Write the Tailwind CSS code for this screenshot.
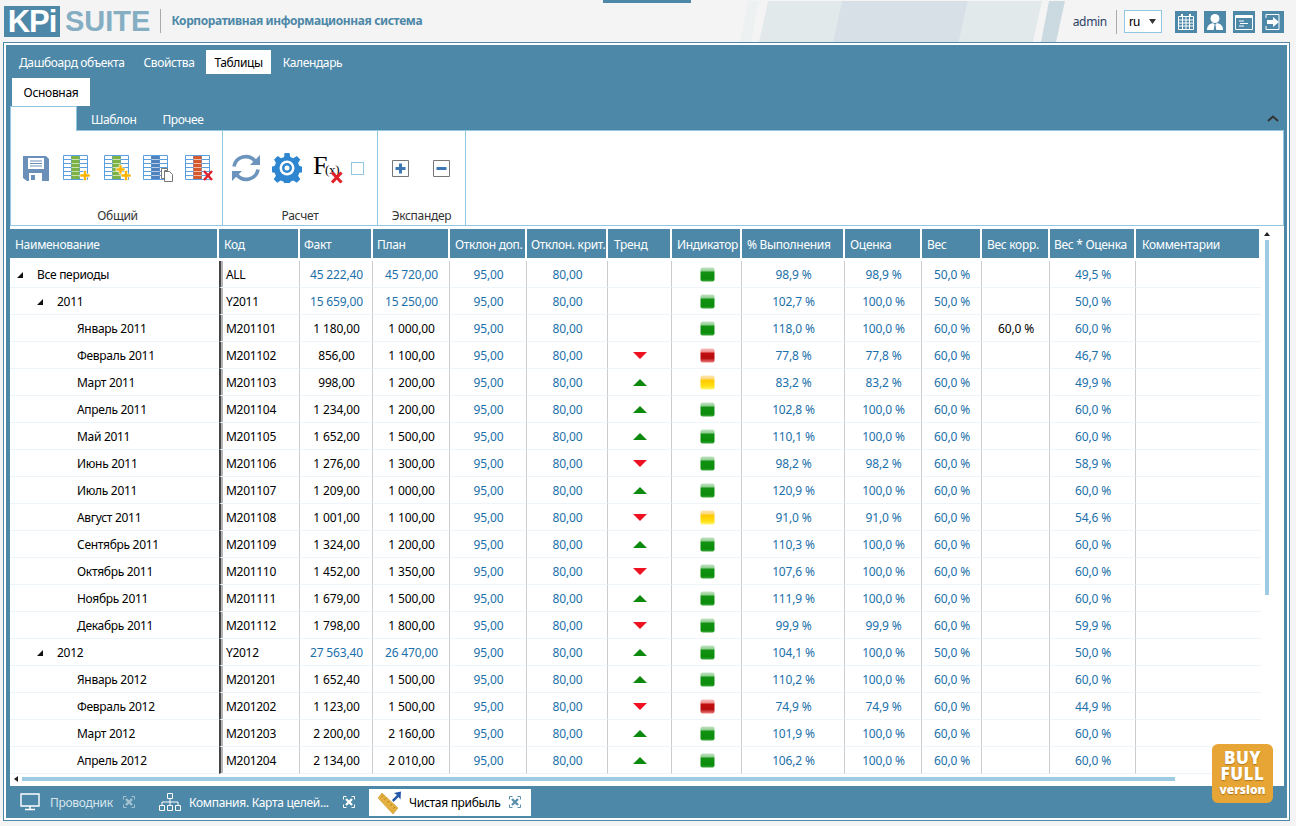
<!DOCTYPE html>
<html lang="ru">
<head>
<meta charset="utf-8">
<script src="https://cdn.jsdelivr.net/npm/@tailwindcss/browser@4"></script>
<title>KPI Suite</title>
</head>
<body class="w-[1296px] h-[826px] overflow-hidden bg-[#f4f4f4] font-['Noto_Sans','Open_Sans',sans-serif] text-[12px] tracking-[-0.3px] text-black">
<svg width="0" height="0" class="absolute">
<defs>
<linearGradient id="gg" x1="0" y1="0" x2="0" y2="1"><stop offset="0" stop-color="#c4e4c4"/><stop offset=".25" stop-color="#8fcd8f"/><stop offset=".32" stop-color="#129212"/><stop offset=".82" stop-color="#0b8c0b"/><stop offset="1" stop-color="#3aa83a"/></linearGradient>
<linearGradient id="gr" x1="0" y1="0" x2="0" y2="1"><stop offset="0" stop-color="#f7c0c0"/><stop offset=".25" stop-color="#f08c8c"/><stop offset=".32" stop-color="#c30d0d"/><stop offset=".7" stop-color="#b50c0c"/><stop offset="1" stop-color="#f08080"/></linearGradient>
<linearGradient id="gy" x1="0" y1="0" x2="0" y2="1"><stop offset="0" stop-color="#fbe6b0"/><stop offset=".25" stop-color="#fdd878"/><stop offset=".32" stop-color="#ffc800"/><stop offset=".75" stop-color="#ffdf10"/><stop offset="1" stop-color="#fff670"/></linearGradient>
<symbol id="ig" viewBox="0 0 15 15"><rect x=".5" y=".5" width="14" height="14" rx="2" fill="url(#gg)"/></symbol>
<symbol id="ir" viewBox="0 0 15 15"><rect x=".5" y=".5" width="14" height="14" rx="2" fill="url(#gr)"/></symbol>
<symbol id="iy" viewBox="0 0 15 15"><rect x=".5" y=".5" width="14" height="14" rx="2" fill="url(#gy)"/></symbol>
<symbol id="up" viewBox="0 0 14 7"><path d="M7 0 14 7H0z" fill="#0d8a0d"/></symbol>
<symbol id="dn" viewBox="0 0 14 7"><path d="M0 0H14L7 7z" fill="#ee1122"/></symbol>
<symbol id="ar" viewBox="0 0 6 6"><path d="M6 0V6H0z" fill="#111"/></symbol>
<symbol id="grid" viewBox="0 0 25 25">
<path d="M.5.5h24v24H.5zM.5 4.500h24M.5 8.500h24M.5 12.500h24M.5 16.500h24M.5 20.500h24M8.500 .5v24M16.500 .5v24" fill="none" stroke="#5a9fe0"/>
<path d="M8.500 1h8v23h-8z" fill="currentColor"/>
<path d="M8.500 4.500h8M8.500 8.500h8M8.500 12.500h8M8.500 16.500h8M8.500 20.500h8" stroke="#fff" stroke-width=".6"/>
</symbol>
<symbol id="exp" viewBox="0 0 12 12"><path d="M.5 3.500v-3h3M8.500.5h3v3M11.500 8.500v3h-3M3.500 11.500h-3v-3" fill="none" stroke="currentColor"/><path d="M3 3l6 6M9 3l-6 6" stroke="currentColor" stroke-width="2.400"/></symbol>
</defs>
</svg>

<header class="relative h-[42px] flex items-start">
  <svg class="absolute left-0 top-0" width="1296" height="42">
    <path d="M603 0h88v3h-88z" fill="#4d88a8"/>
    <path d="M748 1h11l-8 41h-11z" fill="#eef1f2"/>
    <path d="M768 1h74l-9 41h-74z" fill="#e2e9ea"/>
    <path d="M842 1h126l-9 41h-126z" fill="#d6e0e6"/>
    <path d="M968 1h74l-9 41h-74z" fill="#e2e9ea"/>
    <path d="M1049 1h16l-9 41h-15z" fill="#cbd9e1"/>
  </svg>
  <div class="relative ml-[4px] mt-[6px] w-[56px] h-[31px] bg-[#4d88a8] text-white font-['Liberation_Sans',sans-serif] font-bold text-[31px] leading-[31px] text-center tracking-[-1px]">KPi</div>
  <div class="relative ml-[5px] mt-[6px] h-[31px] text-[#86aec3] font-['Liberation_Sans',sans-serif] font-bold text-[29px] leading-[31px] tracking-normal">SUITE</div>
  <div class="relative ml-[10px] mt-[9px] w-px h-[24px] bg-[#aaa]"></div>
  <div class="relative ml-[10px] mt-[12px] text-[#4d88a8] font-bold text-[12px] leading-[18px] tracking-[-0.4px]">Корпоративная информационная система</div>
  <div class="relative ml-auto flex items-center mt-[10px] mr-[12px] h-[23px]">
    <span class="text-[#2c4264] mr-[9px]">admin</span>
    <span class="w-px h-[24px] bg-[#aaa] mr-[7px]"></span>
    <div class="w-[38px] h-[23px] bg-white border border-[#93c6e0] flex items-center justify-between pl-[4px] pr-[5px] mr-[13px] font-['Liberation_Sans',sans-serif] text-[13px] leading-none">ru<svg width="7" height="5"><path d="M0 0h7L3.500 5z" fill="#333"/></svg></div>
    <div class="flex gap-[7px]">
      <div class="w-[22px] h-[22px] bg-[#4d88a8] flex items-center justify-center"><svg width="18" height="18" viewBox="0 0 18 18" fill="none" stroke="#fff"><path d="M1.500 3.500h15v13h-15zM1.500 7h15M1.500 10h15M1.500 13h15M5.500 3.500v13M9 3.500v13M12.500 3.500v13" /><path d="M5 1v3M13 1v3" stroke-width="2"/></svg></div>
      <div class="w-[22px] h-[22px] bg-[#4d88a8] flex items-center justify-center"><svg width="18" height="18" viewBox="0 0 18 18" fill="#fff"><circle cx="9" cy="5.500" r="4.500"/><path d="M1 17c0-4 2-6 6-7l2 2 2-2c4 1 6 3 6 7z"/><path d="M8.500 12h1l.8 5H7.700z" fill="#4d88a8"/></svg></div>
      <div class="w-[22px] h-[22px] bg-[#4d88a8] flex items-center justify-center"><svg width="18" height="16" viewBox="0 0 18 16" fill="none" stroke="#fff"><path d="M.5 1.500h17v14H.5z"/><path d="M.5 3h17" stroke-width="2"/><path d="M4 7h5M5 9.500h8M4 12h5"/></svg></div>
      <div class="w-[22px] h-[22px] bg-[#4d88a8] flex items-center justify-center"><svg width="18" height="18" viewBox="0 0 18 18" fill="none"><path d="M2 5V1.500h13v15H2V13" stroke="#fff"/><path d="M3 7h6V4l6 5-6 5v-3H3z" fill="#fff"/></svg></div>
    </div>
  </div>
</header>

<main class="relative ml-[3px] w-[1287px] h-[779px] border border-[#4d88a8]">
 <div class="h-full border-2 border-white bg-[#4d88a8] flex flex-col">
  <nav class="flex h-[24px] mt-[5px] ml-[5px] text-white leading-[26px] tracking-[-0.38px]">
    <span class="px-[8px]">Дашбоард объекта</span>
    <span class="px-[8px] ml-[3px]">Свойства</span>
    <span class="px-[8px] ml-[4px] bg-white text-black">Таблицы</span>
    <span class="px-[8px] ml-[4px]">Календарь</span>
  </nav>
  <div class="mt-[4px] ml-[6px] w-[78px] h-[28px] bg-white text-center leading-[30px]">Основная</div>
  <div class="relative flex h-[24px] ml-[4px] mr-[3px] text-white leading-[28px] tracking-[-0.4px]">
    <div class="relative z-10 w-[67px] h-[25px] bg-white border border-b-0 border-[#93c6e0]"></div>
    <span class="ml-[14px]">Шаблон</span>
    <span class="ml-[26px]">Прочее</span>
    <svg class="ml-auto mt-[9px] mr-[5px]" width="12" height="7" viewBox="0 0 12 7" fill="none" stroke="#333" stroke-width="2"><path d="M1 6l5-4.500L11 6"/></svg>
  </div>
  <div class="flex h-[96px] ml-[4px] mr-[3px] bg-white border border-[#93c6e0]">
    <section class="w-[212px] border-r border-[#93c6e0] flex flex-col">
      <div class="h-[71px] flex items-center pl-[12px] pt-[3px]">
        <svg width="26" height="26" viewBox="0 0 26 26"><path d="M0 1h23l3 3v22H4l-4-3z" fill="#6a8fb8"/><path d="M5 3h16v11H5z" fill="#fff"/><path d="M7 6h12M7 8.500h12M7 11h12" stroke="#6a8fb8"/><path d="M6 18h13v8H6z" fill="#fff"/><path d="M8 20h4v5H8z" fill="#6a8fb8"/></svg>
        <svg class="ml-[14px]" width="28" height="28" viewBox="0 0 28 28" style="color:#7cb342"><use href="#grid" y="1" width="25" height="25"/><path d="M17 20h3.500v-3.500h3V20H27v3h-3.500v3.500h-3V23H17z" fill="#fdb400" stroke="#fff" stroke-width=".6"/></svg>
        <svg class="ml-[13px]" width="28" height="28" viewBox="0 0 28 28" style="color:#7cb342"><use href="#grid" y="1" width="25" height="25"/><path d="M12 14h3v-3h3v3h3v3h-3v3h-3v-3h-3z" fill="#fdb400" stroke="#fff" stroke-width=".6"/><path d="M17 20h3.500v-3.500h3V20H27v3h-3.500v3.500h-3V23H17z" fill="#fdb400" stroke="#fff" stroke-width=".6"/></svg>
        <svg class="ml-[11px]" width="31" height="28" viewBox="0 0 31 28" style="color:#4f81bd"><use href="#grid" y="1" width="25" height="25"/><path d="M18.500 14.500h6v2h-3v8h-3z" fill="#fff" stroke="#777"/><path d="M21.500 17.500h5l3 3v7h-8z" fill="#fff" stroke="#777"/></svg>
        <svg class="ml-[11px]" width="30" height="28" viewBox="0 0 30 28" style="color:#d8582a"><use href="#grid" y="1" width="25" height="25"/><path d="M19 17l8 9M27 17l-8 9" stroke="#e0202a" stroke-width="2.400" fill="none"/></svg>
      </div>
      <div class="text-center text-[#333] leading-[16px] mt-[6px] pl-[2px]">Общий</div>
    </section>
    <section class="w-[155px] border-r border-[#93c6e0] flex flex-col">
      <div class="h-[71px] flex items-center pl-[8px] pt-[3px]">
        <svg width="30" height="28" viewBox="0 0 30 28" fill="none" stroke="#6c94bd" stroke-width="3.600"><path d="M3 12.500A12 12 0 0 1 24 7"/><path d="M27 15.500A12 12 0 0 1 6 21"/><path d="M29 1v10H19z" fill="#6c94bd" stroke="none"/><path d="M1 27V17h10z" fill="#6c94bd" stroke="none"/></svg>
        <svg class="ml-[11px]" width="30" height="30" viewBox="0 0 30 30"><path d="M12.500 0h5l.8 4 3 1.300 3.500-2.200 3.500 3.500-2.200 3.500 1.300 3 4 .8v5l-4 .8-1.300 3 2.200 3.500-3.500 3.500-3.500-2.200-3 1.300-.8 3h-5l-.8-3-3-1.300-3.500 2.200-3.500-3.500 2.200-3.500-1.300-3-4-.8v-5l4-.8 1.300-3L2.100 6.600 5.600 3.100l3.500 2.200 3-1.300z" fill="#2f86d0"/><circle cx="15" cy="15" r="7.500" fill="#fff"/><circle cx="15" cy="15" r="5" fill="#2f86d0"/><circle cx="15" cy="15" r="2.500" fill="#fff"/></svg>
        <svg class="ml-[11px]" width="32" height="32" viewBox="0 0 32 32"><text x="0" y="22" font-family="Liberation Serif" font-size="26" fill="#000">F</text><text x="12" y="22" font-family="Liberation Serif" font-size="13" fill="#000">(x)</text><path d="M19 20.500l9.500 10M28.500 20.500l-9.500 10" stroke="#e0202a" stroke-width="3.200" fill="none"/></svg>
        <span class="ml-[6px] w-[13px] h-[13px] border border-[#93c6e0]"></span>
      </div>
      <div class="text-center text-[#333] leading-[16px] mt-[6px]">Расчет</div>
    </section>
    <section class="w-[88px] border-r border-[#93c6e0] flex flex-col">
      <div class="h-[71px] flex items-center pl-[14px] pt-[3px]">
        <svg width="17" height="17" viewBox="0 0 17 17"><path d="M.5.500h16v16H.5z" fill="#fff" stroke="#777"/><path d="M3.500 7h3.500V3.500h3V7h3.500v3H10v3.500H7V10H3.500z" fill="#3d78b5"/></svg>
        <svg class="ml-[24px]" width="17" height="17" viewBox="0 0 17 17"><path d="M.5.500h16v16H.5z" fill="#fff" stroke="#777"/><path d="M3.500 7h10v3h-10z" fill="#3d78b5"/></svg>
      </div>
      <div class="text-center text-[#333] leading-[16px] mt-[6px]">Экспандер</div>
    </section>
  </div>
  <div class="relative h-[560px] ml-[4px] mr-[3px] bg-white pt-[3px]">
    <table class="table-fixed border-separate border-spacing-0 w-[1251px] [&_th]:bg-[#4d88a8] [&_th]:text-white [&_th]:font-normal [&_th]:text-left [&_th]:h-[29px] [&_th]:pl-[4px] [&_th]:pr-0 [&_th]:pt-[3px] [&_th]:border-r-2 [&_th]:border-white [&_th]:whitespace-nowrap [&_th]:overflow-hidden [&_td]:h-[27px] [&_td]:p-0 [&_td]:pl-[1px] [&_td]:pt-[2px] [&_td]:tracking-[-0.15px] [&_td]:border-b [&_td]:border-b-[#edf4fa] [&_td]:border-r [&_td]:border-r-[#cccccc] [&_td]:text-center [&_td]:whitespace-nowrap [&_td:nth-child(1)]:text-left [&_td:nth-child(1)]:tracking-[-0.3px] [&_td:nth-child(1)]:border-r-0 [&_td:nth-child(1)]:text-black [&_td:nth-child(2)]:text-left [&_td:nth-child(2)]:tracking-[-0.3px] [&_td:nth-child(2)]:text-black [&_td:nth-child(2)]:border-l-2 [&_td:nth-child(2)]:border-l-[#444] [&_td:nth-child(2)]:shadow-[inset_2px_0_0_#b5b5b5] [&_td:nth-child(2)]:pl-[5px] [&_td:nth-child(14)]:border-r-0 [&_td_svg]:inline-block [&_td_svg]:align-middle [&_td_svg]:-translate-y-px">
      <colgroup><col class="w-[209px]"><col class="w-[81px]"><col class="w-[73px]"><col class="w-[77px]"><col class="w-[77px]"><col class="w-[81px]"><col class="w-[64px]"><col class="w-[70px]"><col class="w-[103px]"><col class="w-[77px]"><col class="w-[60px]"><col class="w-[68px]"><col class="w-[86px]"><col class="w-[125px]"></colgroup>
      <thead><tr><th class="!pl-[5px]">Наименование</th><th class="!pl-[5px]">Код</th><th>Факт</th><th>План</th><th class="!pl-[5px]">Отклон доп.</th><th>Отклон. крит.</th><th class="!pl-[6px]">Тренд</th><th class="!pl-[5px]">Индикатор</th><th class="!pl-[5px]">% Выполнения</th><th class="!pl-[5px]">Оценка</th><th class="!pl-[5px]">Вес</th><th class="!pl-[5px]">Вес корр.</th><th>Вес * Оценка</th><th class="!pl-[6px]">Комментарии</th></tr>
      <tr><td colspan="14" class="!h-[3px] !p-0 !border-b-0 !border-r-0 !border-l-0 !shadow-none"></td></tr></thead>
      <tbody class="text-[#1b70aa]">
      <tr><td class="!pl-[7px]"><svg class="mr-[14px]" width="6" height="6"><use href="#ar"/></svg>Все периоды</td><td>ALL</td><td>45 222,40</td><td>45 720,00</td><td>95,00</td><td>80,00</td><td></td><td><svg width="15" height="15"><use href="#ig"/></svg></td><td>98,9 %</td><td>98,9 %</td><td>50,0 %</td><td></td><td>49,5 %</td><td></td></tr>
      <tr><td class="!pl-[27px]"><svg class="mr-[14px]" width="6" height="6"><use href="#ar"/></svg>2011</td><td>Y2011</td><td>15 659,00</td><td>15 250,00</td><td>95,00</td><td>80,00</td><td></td><td><svg width="15" height="15"><use href="#ig"/></svg></td><td>102,7 %</td><td>100,0 %</td><td>50,0 %</td><td></td><td>50,0 %</td><td></td></tr>
      <tr><td class="!pl-[67px]">Январь 2011</td><td>M201101</td><td class="text-black">1 180,00</td><td class="text-black">1 000,00</td><td>95,00</td><td>80,00</td><td></td><td><svg width="15" height="15"><use href="#ig"/></svg></td><td>118,0 %</td><td>100,0 %</td><td>60,0 %</td><td class="text-black">60,0 %</td><td>60,0 %</td><td></td></tr>
      <tr><td class="!pl-[67px]">Февраль 2011</td><td>M201102</td><td class="text-black">856,00</td><td class="text-black">1 100,00</td><td>95,00</td><td>80,00</td><td><svg width="14" height="7"><use href="#dn"/></svg></td><td><svg width="15" height="15"><use href="#ir"/></svg></td><td>77,8 %</td><td>77,8 %</td><td>60,0 %</td><td></td><td>46,7 %</td><td></td></tr>
      <tr><td class="!pl-[67px]">Март 2011</td><td>M201103</td><td class="text-black">998,00</td><td class="text-black">1 200,00</td><td>95,00</td><td>80,00</td><td><svg width="14" height="7"><use href="#up"/></svg></td><td><svg width="15" height="15"><use href="#iy"/></svg></td><td>83,2 %</td><td>83,2 %</td><td>60,0 %</td><td></td><td>49,9 %</td><td></td></tr>
      <tr><td class="!pl-[67px]">Апрель 2011</td><td>M201104</td><td class="text-black">1 234,00</td><td class="text-black">1 200,00</td><td>95,00</td><td>80,00</td><td><svg width="14" height="7"><use href="#up"/></svg></td><td><svg width="15" height="15"><use href="#ig"/></svg></td><td>102,8 %</td><td>100,0 %</td><td>60,0 %</td><td></td><td>60,0 %</td><td></td></tr>
      <tr><td class="!pl-[67px]">Май 2011</td><td>M201105</td><td class="text-black">1 652,00</td><td class="text-black">1 500,00</td><td>95,00</td><td>80,00</td><td><svg width="14" height="7"><use href="#up"/></svg></td><td><svg width="15" height="15"><use href="#ig"/></svg></td><td>110,1 %</td><td>100,0 %</td><td>60,0 %</td><td></td><td>60,0 %</td><td></td></tr>
      <tr><td class="!pl-[67px]">Июнь 2011</td><td>M201106</td><td class="text-black">1 276,00</td><td class="text-black">1 300,00</td><td>95,00</td><td>80,00</td><td><svg width="14" height="7"><use href="#dn"/></svg></td><td><svg width="15" height="15"><use href="#ig"/></svg></td><td>98,2 %</td><td>98,2 %</td><td>60,0 %</td><td></td><td>58,9 %</td><td></td></tr>
      <tr><td class="!pl-[67px]">Июль 2011</td><td>M201107</td><td class="text-black">1 209,00</td><td class="text-black">1 000,00</td><td>95,00</td><td>80,00</td><td><svg width="14" height="7"><use href="#up"/></svg></td><td><svg width="15" height="15"><use href="#ig"/></svg></td><td>120,9 %</td><td>100,0 %</td><td>60,0 %</td><td></td><td>60,0 %</td><td></td></tr>
      <tr><td class="!pl-[67px]">Август 2011</td><td>M201108</td><td class="text-black">1 001,00</td><td class="text-black">1 100,00</td><td>95,00</td><td>80,00</td><td><svg width="14" height="7"><use href="#dn"/></svg></td><td><svg width="15" height="15"><use href="#iy"/></svg></td><td>91,0 %</td><td>91,0 %</td><td>60,0 %</td><td></td><td>54,6 %</td><td></td></tr>
      <tr><td class="!pl-[67px]">Сентябрь 2011</td><td>M201109</td><td class="text-black">1 324,00</td><td class="text-black">1 200,00</td><td>95,00</td><td>80,00</td><td><svg width="14" height="7"><use href="#up"/></svg></td><td><svg width="15" height="15"><use href="#ig"/></svg></td><td>110,3 %</td><td>100,0 %</td><td>60,0 %</td><td></td><td>60,0 %</td><td></td></tr>
      <tr><td class="!pl-[67px]">Октябрь 2011</td><td>M201110</td><td class="text-black">1 452,00</td><td class="text-black">1 350,00</td><td>95,00</td><td>80,00</td><td><svg width="14" height="7"><use href="#dn"/></svg></td><td><svg width="15" height="15"><use href="#ig"/></svg></td><td>107,6 %</td><td>100,0 %</td><td>60,0 %</td><td></td><td>60,0 %</td><td></td></tr>
      <tr><td class="!pl-[67px]">Ноябрь 2011</td><td>M201111</td><td class="text-black">1 679,00</td><td class="text-black">1 500,00</td><td>95,00</td><td>80,00</td><td><svg width="14" height="7"><use href="#up"/></svg></td><td><svg width="15" height="15"><use href="#ig"/></svg></td><td>111,9 %</td><td>100,0 %</td><td>60,0 %</td><td></td><td>60,0 %</td><td></td></tr>
      <tr><td class="!pl-[67px]">Декабрь 2011</td><td>M201112</td><td class="text-black">1 798,00</td><td class="text-black">1 800,00</td><td>95,00</td><td>80,00</td><td><svg width="14" height="7"><use href="#dn"/></svg></td><td><svg width="15" height="15"><use href="#ig"/></svg></td><td>99,9 %</td><td>99,9 %</td><td>60,0 %</td><td></td><td>59,9 %</td><td></td></tr>
      <tr><td class="!pl-[27px]"><svg class="mr-[14px]" width="6" height="6"><use href="#ar"/></svg>2012</td><td>Y2012</td><td>27 563,40</td><td>26 470,00</td><td>95,00</td><td>80,00</td><td><svg width="14" height="7"><use href="#up"/></svg></td><td><svg width="15" height="15"><use href="#ig"/></svg></td><td>104,1 %</td><td>100,0 %</td><td>50,0 %</td><td></td><td>50,0 %</td><td></td></tr>
      <tr><td class="!pl-[67px]">Январь 2012</td><td>M201201</td><td class="text-black">1 652,40</td><td class="text-black">1 500,00</td><td>95,00</td><td>80,00</td><td><svg width="14" height="7"><use href="#up"/></svg></td><td><svg width="15" height="15"><use href="#ig"/></svg></td><td>110,2 %</td><td>100,0 %</td><td>60,0 %</td><td></td><td>60,0 %</td><td></td></tr>
      <tr><td class="!pl-[67px]">Февраль 2012</td><td>M201202</td><td class="text-black">1 123,00</td><td class="text-black">1 500,00</td><td>95,00</td><td>80,00</td><td><svg width="14" height="7"><use href="#dn"/></svg></td><td><svg width="15" height="15"><use href="#ir"/></svg></td><td>74,9 %</td><td>74,9 %</td><td>60,0 %</td><td></td><td>44,9 %</td><td></td></tr>
      <tr><td class="!pl-[67px]">Март 2012</td><td>M201203</td><td class="text-black">2 200,00</td><td class="text-black">2 160,00</td><td>95,00</td><td>80,00</td><td><svg width="14" height="7"><use href="#up"/></svg></td><td><svg width="15" height="15"><use href="#ig"/></svg></td><td>101,9 %</td><td>100,0 %</td><td>60,0 %</td><td></td><td>60,0 %</td><td></td></tr>
      <tr><td class="!pl-[67px]">Апрель 2012</td><td>M201204</td><td class="text-black">2 134,00</td><td class="text-black">2 010,00</td><td>95,00</td><td>80,00</td><td><svg width="14" height="7"><use href="#up"/></svg></td><td><svg width="15" height="15"><use href="#ig"/></svg></td><td>106,2 %</td><td>100,0 %</td><td>60,0 %</td><td></td><td>60,0 %</td><td></td></tr>
      </tbody>
    </table>
    <svg class="absolute left-[1254px] top-[6px]" width="6" height="4"><path d="M3 0l3 4H0z" fill="#222"/></svg>
    <div class="absolute left-[1255px] top-[14px] w-[4px] h-[355px] bg-[#9ccbe3]"></div>
    <svg class="absolute left-[4px] top-[550px]" width="4" height="6"><path d="M4 0v6L0 3z" fill="#222"/></svg>
    <div class="absolute left-[12px] top-[551px] w-[1153px] h-[4px] bg-[#9ccbe3]"></div>
  </div>
  <footer class="flex-1 flex items-center ml-[14px] text-white">
    <svg width="20" height="18" viewBox="0 0 20 18" fill="none" stroke="#fff" stroke-width="1.400"><path d="M1 1h18v12H1z"/><path d="M10 13v3M5 16.500h10"/></svg>
    <span class="ml-[10px] w-[73px] pt-[2px] text-[#d7e6ee]">Проводник</span>
    <svg class="text-[#a5c3d3]" width="12" height="12"><use href="#exp"/></svg>
    <svg class="ml-[24px]" width="22" height="18" viewBox="0 0 22 18" fill="none" stroke="#fff"><path d="M8.500.500h5v5h-5zM.5 12.500h5v5h-5zM8.500 12.500h5v5h-5zM16.500 12.500h5v5h-5zM3 12V9h16v3M11 5.500V12"/></svg>
    <span class="ml-[8px] w-[154px] pt-[2px]">Компания. Карта целей...</span>
    <svg class="text-white" width="12" height="12"><use href="#exp"/></svg>
    <div class="ml-[14px] w-[162px] h-[27px] bg-white flex items-center text-black pl-[9px]">
      <svg width="24" height="24" viewBox="0 0 24 24"><path d="M0 8 4 3 20 18 15 24z" fill="#e3b040" stroke="#c8962a" stroke-width=".6"/><path d="M5 5.500l-1.500 1.500M8 8l-1.500 1.500M11 11l-1.500 1.500M14 14l-1.500 1.500M17 17l-1.500 1.500" stroke="#a87a18"/><path d="M14 10 19 5 16 3 23 1.500 22.500 9.500 20.500 7 15.500 12z" fill="#2457a8"/></svg>
      <span class="ml-[7px] w-[100px] pt-[2px]">Чистая прибыль</span>
      <svg class="text-[#5a90ad]" width="12" height="12"><use href="#exp"/></svg>
    </div>
  </footer>
 </div>
 <div class="absolute left-[1208px] top-[701px] w-[61px] h-[59px] rounded-[6px] bg-[#e6a535] flex flex-col items-center justify-center text-white font-['Open_Sans',sans-serif] font-extrabold [text-shadow:0_1px_1px_rgba(120,70,0,.5)]">
   <span class="text-[17px] leading-[16px] tracking-[0.5px]">BUY</span>
   <span class="text-[17px] leading-[16px] tracking-[0.5px]">FULL</span>
   <span class="text-[12px] leading-[14px] tracking-normal mt-[1px]">version</span>
 </div>
</main>
</body>
</html>
